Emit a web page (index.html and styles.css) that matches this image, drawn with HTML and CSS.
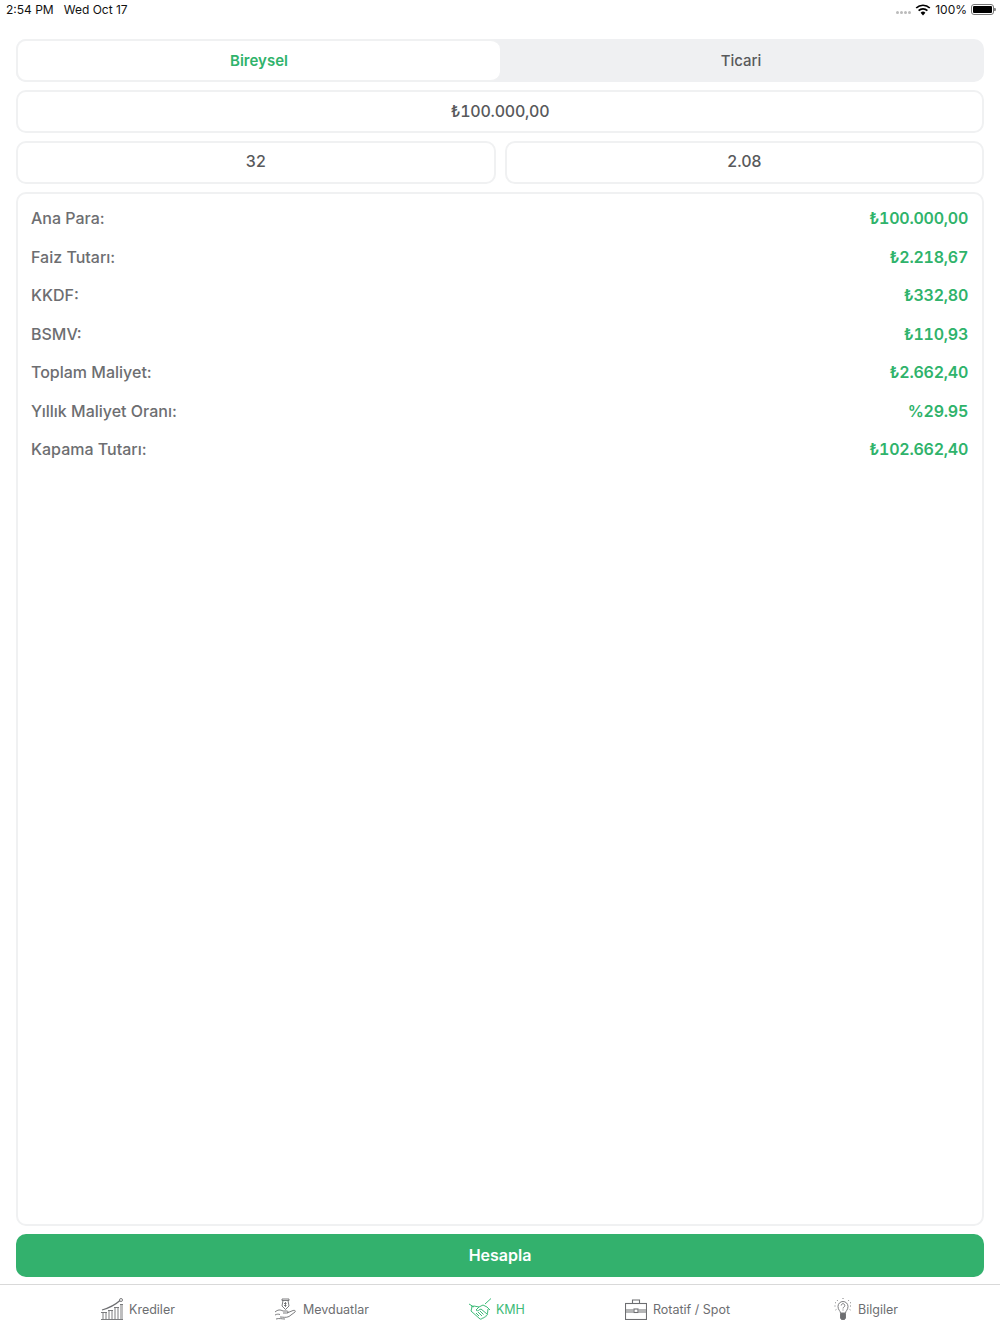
FILE: index.html
```html
<!DOCTYPE html>
<html lang="tr">
<head>
    <meta charset="UTF-8">
    <meta name="viewport" content="width=device-width, initial-scale=1.0">
    <title>KMH</title>
    <link rel="stylesheet" href="styles.css">
</head>
<body>
    <div class="status-bar">
        <div class="status-left"><span>2:54 PM</span><span>Wed Oct 17</span></div>
        <div class="status-right">
            <span class="signal"><i></i><i></i><i></i><i></i></span>
            <svg class="wifi" width="16" height="12" viewBox="0 0 16 12"><path d="M8 11.5 5.6 8.7a3.5 3.5 0 0 1 4.8 0z" fill="#000"/><path d="M3.6 6.7a6.3 6.3 0 0 1 8.8 0M1.2 4a9.8 9.8 0 0 1 13.6 0" fill="none" stroke="#000" stroke-width="1.7"/></svg>
            <span>100%</span>
            <span class="battery"><span class="battery-fill"></span></span>
        </div>
    </div>

    <div class="content">
        <div class="segment">
            <div class="segment-item active">Bireysel</div>
            <div class="segment-item">Ticari</div>
        </div>
        <div class="field">₺100.000,00</div>
        <div class="field-row">
            <div class="field">32</div>
            <div class="field">2.08</div>
        </div>
        <div class="results">
            <div class="result-row"><span>Ana Para:</span><span class="value">₺100.000,00</span></div>
            <div class="result-row"><span>Faiz Tutarı:</span><span class="value">₺2.218,67</span></div>
            <div class="result-row"><span>KKDF:</span><span class="value">₺332,80</span></div>
            <div class="result-row"><span>BSMV:</span><span class="value">₺110,93</span></div>
            <div class="result-row"><span>Toplam Maliyet:</span><span class="value">₺2.662,40</span></div>
            <div class="result-row"><span>Yıllık Maliyet Oranı:</span><span class="value">%29.95</span></div>
            <div class="result-row"><span>Kapama Tutarı:</span><span class="value">₺102.662,40</span></div>
        </div>
        <button class="submit-btn">Hesapla</button>
    </div>

    <nav class="tab-bar">
        <div class="tab">
            <svg width="22" height="22" viewBox="0 0 22 22" fill="none" stroke="currentColor" stroke-width=".9">
                <path d="M0 21.5h22M2 21V14.500M5 21V14.500M8 21V12.500M11 21V12.500M14 21V9.500M17 21V9.500M20 21V6.500M22 21V6.500M0 14.500h6M7 12.500h5M13 9.500h5M19 6.500h3"/>
                <path d="M1 12 C8 10 14 7 19 2.500" stroke-width="1.3"/>
                <circle cx="20" cy="2" r="1.500"/>
            </svg>
            <span>Krediler</span>
        </div>
        <div class="tab">
            <svg width="22" height="22" viewBox="0 0 22 22" fill="none" stroke="currentColor" stroke-width=".9">
                <path d="M7 1h7v1.500H7zM8 2.500 7 8l3.500 3.500L14 8l-1-5.500"/>
                <path d="M10.500 4v5M9 5.500h2.500M9 7.500h2.500"/>
                <path d="M0 14c3-2.500 5-2.500 8-1h4c1.500 0 1.500 2-.5 2H8M12 15l6-2.500c2-.5 3 .5 2 1.500l-6 4.500c-3 1.500-6 .5-9 .5M0 17c2-1 3-1 5-.5M1 21c3-1 6 0 9 0"/>
            </svg>
            <span>Mevduatlar</span>
        </div>
        <div class="tab active">
            <svg width="23" height="23" viewBox="0 0 23 23" fill="none" stroke="currentColor" stroke-width="1">
                <path d="M0 6l5 3M16 6l6-5.500M2 9l3-1 5 1 4-2 4 2 3 3"/>
                <path d="M3 9l-1 4 9 8c1 .5 2 0 2-1 1 .5 2 0 2-1 1 .5 2 0 2-1.500 1 0 2-1 1.500-2L19 11"/>
                <path d="M10 9 7 12c1 1 2 1 3 0l2-1 6 5M7 15l3 3M9 14l4 4M11 13l3.500 3.500"/>
            </svg>
            <span>KMH</span>
        </div>
        <div class="tab">
            <svg width="22" height="21" viewBox="0 0 22 21" fill="none" stroke="currentColor" stroke-width="1.1">
                <rect x=".5" y="4.500" width="21" height="16"/>
                <path d="M7.500 4.500V1h7v3.500M.5 11h8M13.500 11h8M.5 13h8M13.500 13h8"/>
                <rect x="9" y="10" width="4" height="3.500"/>
            </svg>
            <span>Rotatif / Spot</span>
        </div>
        <div class="tab tab-last">
            <svg width="18" height="22" viewBox="0 0 18 22" fill="none" stroke="currentColor" stroke-width=".9">
                <path d="M6.500 15c0-2-2.500-3-2.500-6.500a5 5 0 0 1 10 0c0 3.500-2.500 4.500-2.500 6.500z"/>
                <path d="M7.200 7.500a1.800 1.800 0 1 1 2.800 1.500c-.7.500-1 .8-1 1.500M9 11.500v1"/>
                <path d="M9 0v1.500M3 2l1 1.200M15 2l-1 1.200M.5 8H2M16 8h1.500M1 4.500l1.300.7M17 4.500l-1.300.7M1.500 12l1.200-.7M16.500 12l-1.200-.7" stroke-dasharray="1 .5"/>
                <path d="M6.500 15.500h5V20l-1 1.500h-3l-1-1.500z" fill="currentColor"/>
            </svg>
            <span>Bilgiler</span>
        </div>
    </nav>
</body>
</html>
```

FILE: styles.css
```css
html, body { height: 100%; }
body { margin: 0; background: white; font-family: Inter, "Noto Sans", sans-serif; color: #58595b; display: flex; flex-direction: column; height: 1334px; overflow: hidden; }

.status-bar { height: 19px; padding: 0 6px 1px; display: flex; justify-content: space-between; align-items: center; font-size: 12px; color: #111; }
.status-left { display: flex; gap: 10px; }
.status-right { display: flex; align-items: center; gap: 4px; }
.signal { display: flex; gap: 1px; margin-top: 6px; }
.signal i { width: 3px; height: 3px; border-radius: 50%; background: #bbb; }
.battery { width: 23px; height: 11px; border: 1px solid #777; border-radius: 3px; padding: 1px; box-sizing: border-box; position: relative; }
.battery-fill { display: block; height: 100%; background: black; border-radius: 1px; }
.battery::after { content: ""; position: absolute; right: -3px; top: 3px; width: 2px; height: 3px; background: #888; border-radius: 0 1px 1px 0; }

.content { flex: 1; padding: 19px 16px 7px; display: flex; flex-direction: column; gap: 8px; }

.segment { display: flex; height: 43px; flex-shrink: 0; background: #eff0f2; border-radius: 10px; }
.segment-item { flex: 1; display: flex; align-items: center; justify-content: center; font-size: 15px; font-weight: 500; padding-right: 2px; }
.segment-item.active { flex: 0 0 484px; box-sizing: border-box; padding-right: 0; background: white; color: #2fb36b; font-weight: 600; border: 2px solid #f0f1f2; border-right: none; border-radius: 10px; }

.field { height: 43px; box-sizing: border-box; flex-shrink: 0; padding-bottom: 2px; border: 2px solid #f0f1f2; border-radius: 10px; display: flex; align-items: center; justify-content: center; font-size: 16px; font-weight: 500; font-variant-numeric: tabular-nums; letter-spacing: -0.25px; }
.field-row { display: flex; gap: 9px; flex-shrink: 0; }
.field-row .field { flex: 1; padding-bottom: 3px; }

.results { flex: 1; border: 2px solid #f0f1f2; border-radius: 10px; padding: 5px 14px 0 13px; }
.result-row { height: 38.5px; display: flex; justify-content: space-between; align-items: center; font-size: 16px; font-weight: 500; color: #6d6e71; }
.value { color: #2fb36b; font-weight: 600; font-variant-numeric: tabular-nums; letter-spacing: -0.25px; }

.submit-btn { height: 43px; flex-shrink: 0; padding: 0 0 2px; border: none; border-radius: 10px; background: #33b16d; color: white; font-family: inherit; font-size: 16px; font-weight: 600; cursor: pointer; }

.tab-bar { height: 48px; flex-shrink: 0; padding: 0 0 1px 101px; border-top: 1px solid #d9d9d9; display: flex; gap: 100px; align-items: center; font-size: 12.5px; color: #6d6e71; }
.tab { display: flex; align-items: center; gap: 6px; }
.tab svg { display: block; }
.tab.active { color: #3dbb78; gap: 4px; }
.tab-last { margin-left: 4px; }
```
